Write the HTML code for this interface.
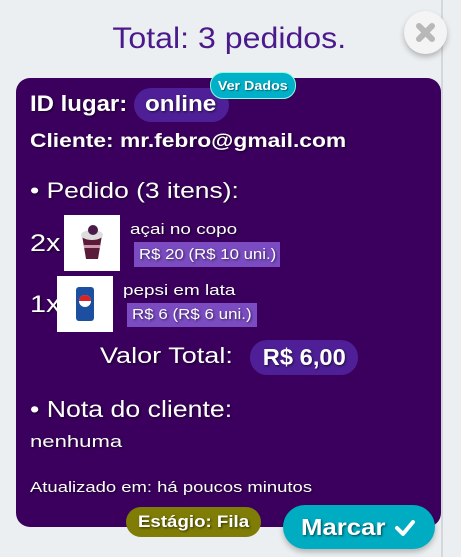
<!DOCTYPE html>
<html><head><meta charset="utf-8"><style>
*{margin:0;padding:0;box-sizing:border-box}
body{width:461px;height:557px;background:#eceff1;font-family:"Liberation Sans",sans-serif;position:relative;overflow:hidden;color:#fff}
.a{position:absolute;white-space:nowrap}
.s{display:inline-block;transform-origin:left center}
.c{display:inline-block;transform-origin:center center}
.sh{text-shadow:1px 1px 2px rgba(0,0,0,.6)}
</style></head><body>
<div class="a" style="left:441px;top:0;width:2px;height:557px;background:#d5d8da"></div>
<div class="a" style="left:0;top:22px;width:458px;text-align:center;font-size:30px;color:#4a1a8c"><span class="c" style="transform:scaleX(1.07)">Total: 3 pedidos.</span></div>
<div class="a" style="left:404px;top:11px;width:43px;height:43px;border-radius:50%;background:#f4f4f4;box-shadow:0 3px 6px rgba(0,0,0,.25)">
<svg width="43" height="43" viewBox="0 0 43 43"><path d="M15 15L28 28M28 15L15 28" stroke="#b8b8b8" stroke-width="6" stroke-linecap="round"/></svg></div>
<div class="a" style="left:16px;top:78px;width:425px;height:449px;background:#3b005e;border-radius:14px"></div>
<div class="a" style="left:134px;top:88px;width:95px;height:34px;border-radius:17px;background:#4e1f96"></div>
<div class="a sh" style="left:30px;top:91px;font-size:22px;font-weight:bold"><span class="s" style="transform:scaleX(1.09)">ID lugar:</span></div>
<div class="a sh" style="left:145px;top:91px;font-size:22px;font-weight:bold"><span class="s" style="transform:scaleX(1.1)">online</span></div>
<div class="a" style="left:210px;top:72px;width:86px;height:27px;border-radius:13px;background:#00b0c8;border:1px solid #8fd;font-size:13px;font-weight:bold;text-align:center;line-height:25px;text-shadow:1px 1px 1px rgba(0,0,0,.4)"><span class="c" style="transform:scaleX(1.1)">Ver Dados</span></div>
<div class="a sh" style="left:30px;top:131px;font-size:19px;font-weight:bold"><span class="s" style="transform:scaleX(1.2)">Cliente: mr.febro@gmail.com</span></div>
<div class="a sh" style="left:30px;top:178px;font-size:22px"><span class="s" style="transform:scaleX(1.2)">• Pedido (3 itens):</span></div>
<div class="a sh" style="left:30px;top:230px;font-size:24px"><span class="s" style="transform:scaleX(1.2)">2x</span></div>
<div class="a" style="left:64px;top:215px;width:56px;height:56px;background:#fff"><svg width="56" height="56"><path d="M18 20h20l-4 24h-12z" fill="#5a1a3a"/><ellipse cx="28" cy="20" rx="11" ry="5" fill="#ddd"/><circle cx="29" cy="15" r="5" fill="#4a1a4a"/><rect x="20" y="30" width="16" height="3" fill="#c9a"/></svg></div>
<div class="a sh" style="left:130px;top:221px;font-size:15px"><span class="s" style="transform:scaleX(1.26)">açai no copo</span></div>
<div class="a" style="left:134px;top:242px;width:146px;height:25px;background:#7b4bc2;font-size:15px;line-height:25px;padding-left:5px"><span class="s sh" style="transform:scaleX(1.12)">R$ 20 (R$ 10 uni.)</span></div>
<div class="a sh" style="left:30px;top:291px;font-size:24px"><span class="s" style="transform:scaleX(1.2)">1x</span></div>
<div class="a" style="left:57px;top:276px;width:56px;height:56px;background:#fff"><svg width="56" height="56"><rect x="19" y="11" width="18" height="34" rx="3" fill="#1d4fa0"/><circle cx="28" cy="25" r="6" fill="#fff"/><path d="M22 25a6 6 0 0 1 12 0z" fill="#d22"/></svg></div>
<div class="a sh" style="left:123px;top:282px;font-size:15px"><span class="s" style="transform:scaleX(1.26)">pepsi em lata</span></div>
<div class="a" style="left:127px;top:303px;width:130px;height:24px;background:#7b4bc2;font-size:15px;line-height:24px;padding-left:5px"><span class="s sh" style="transform:scaleX(1.13)">R$ 6 (R$ 6 uni.)</span></div>
<div class="a sh" style="left:100px;top:343px;font-size:22px"><span class="s" style="transform:scaleX(1.23)">Valor Total:</span></div>
<div class="a" style="left:250px;top:340px;width:108px;height:35px;border-radius:17px;background:#4e1f96;text-align:center;line-height:35px;font-size:23px;font-weight:bold"><span class="c sh" style="transform:scaleX(1.03)">R$ 6,00</span></div>
<div class="a sh" style="left:30px;top:396px;font-size:23px"><span class="s" style="transform:scaleX(1.16)">• Nota do cliente:</span></div>
<div class="a sh" style="left:30px;top:432px;font-size:17px"><span class="s" style="transform:scaleX(1.3)">nenhuma</span></div>
<div class="a sh" style="left:30px;top:479px;font-size:15px"><span class="s" style="transform:scaleX(1.23)">Atualizado em: há poucos minutos</span></div>
<div class="a" style="left:126px;top:507px;width:135px;height:30px;border-radius:15px;background:#7f7d05;text-align:center;line-height:30px;font-size:17px;font-weight:bold"><span class="c sh" style="transform:scaleX(1.1)">Estágio: Fila</span></div>
<div class="a" style="left:283px;top:505px;width:152px;height:44px;border-radius:22px;background:#00acc1;box-shadow:0 3px 6px rgba(0,0,0,.25);font-size:23px;font-weight:bold;line-height:44px;padding-left:18px"><span class="s sh" style="transform:scaleX(1.12)">Marcar</span>
<svg style="position:absolute;left:111px;top:13px" width="22" height="20"><path d="M3 10l6 6L19 4" stroke="#fff" stroke-width="4" fill="none" stroke-linecap="round" stroke-linejoin="round"/></svg></div>
</body></html>
